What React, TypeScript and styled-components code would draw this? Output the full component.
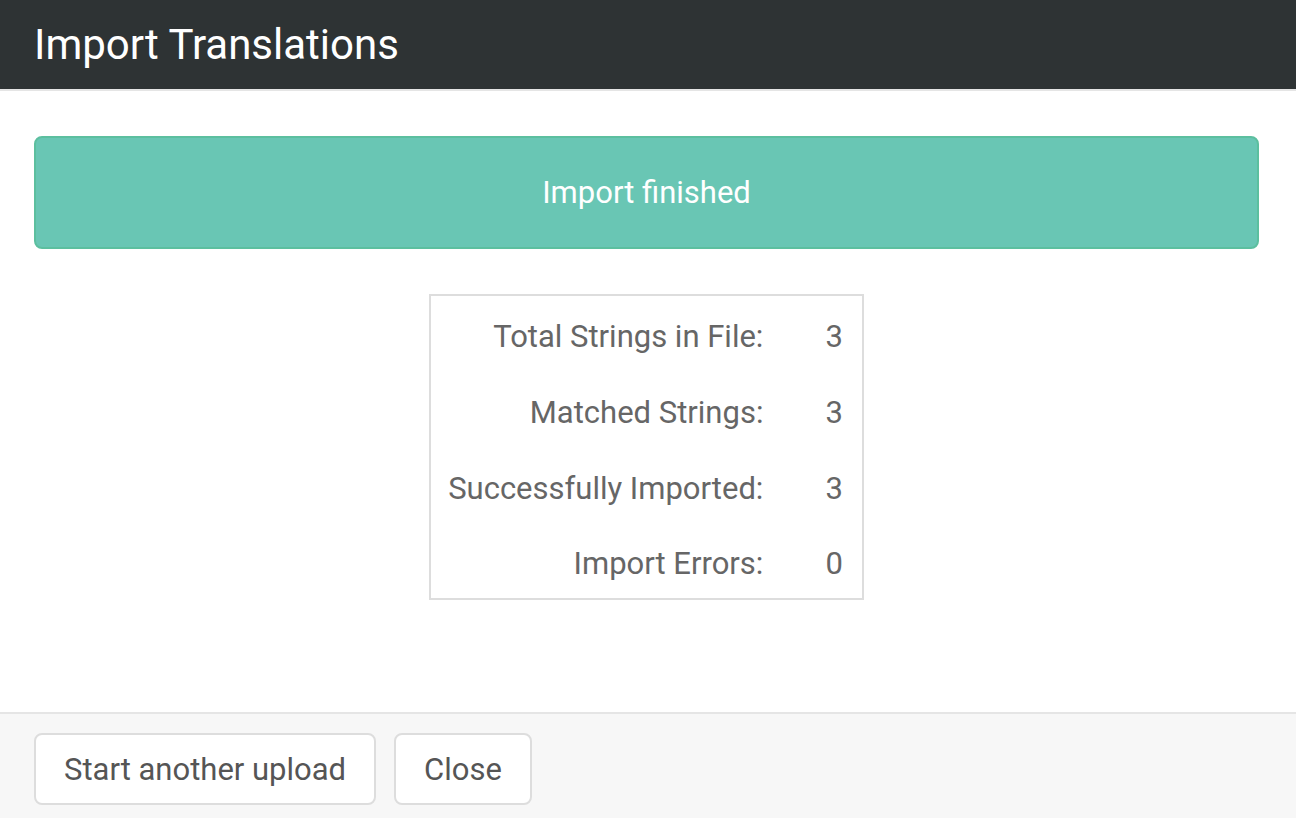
import styled, { createGlobalStyle } from "styled-components";

const GlobalStyle = createGlobalStyle`
  html, body {
    margin: 0;
    padding: 0;
    background: #fff;
    font-family: Roboto, "Liberation Sans", sans-serif;
  }
`;

const Header = styled.header`
  height: 89px;
  display: flex;
  align-items: center;
  padding: 0 34px;
  background: #2e3334;
  border-bottom: 2px solid #e5e5e5;
`;

const Title = styled.h1`
  margin: 0;
  font-size: 42px;
  font-weight: 400;
  color: #fff;
`;

const Body = styled.main`
  padding: 45px 37px 112px 34px;
  display: flex;
  flex-direction: column;
  align-items: center;
  gap: 45px;
`;

const Alert = styled.div`
  align-self: stretch;
  height: 113px;
  box-sizing: border-box;
  display: flex;
  align-items: center;
  justify-content: center;
  background: #69c6b4;
  border: 2px solid #5cbf9f;
  border-radius: 8px;
  color: #fff;
  font-size: 31px;
`;

const Stats = styled.table`
  border: 2px solid #ddd;
  border-collapse: collapse;
  font-size: 31px;
  color: #666;
`;

const Row = styled.tr`
  height: 76px;
`;

const Cell = styled.td<{ $value?: boolean }>`
  padding: 6px ${(p) => (p.$value ? "19px" : "0")} 0 ${(p) => (p.$value ? "62px" : "17px")};
  text-align: right;
  white-space: nowrap;
`;

const Footer = styled.footer`
  border-top: 2px solid #e5e5e5;
  background: #f7f7f7;
  padding: 19px 34px 30px;
  display: flex;
  gap: 18px;
`;

const Button = styled.button`
  height: 72px;
  padding: 0 28px;
  background: #fff;
  border: 2px solid #ddd;
  border-radius: 8px;
  font-family: inherit;
  font-size: 31px;
  color: #555;
`;

const stats = [
  ["Total Strings in File:", 3],
  ["Matched Strings:", 3],
  ["Successfully Imported:", 3],
  ["Import Errors:", 0],
] as const;

export default function App() {
  return (
    <>
      <GlobalStyle />
      <Header>
        <Title>Import Translations</Title>
      </Header>
      <Body>
        <Alert>Import finished</Alert>
        <Stats>
          <tbody>
            {stats.map(([label, value]) => (
              <Row key={label}>
                <Cell>{label}</Cell>
                <Cell $value>{value}</Cell>
              </Row>
            ))}
          </tbody>
        </Stats>
      </Body>
      <Footer>
        <Button>Start another upload</Button>
        <Button>Close</Button>
      </Footer>
    </>
  );
}
